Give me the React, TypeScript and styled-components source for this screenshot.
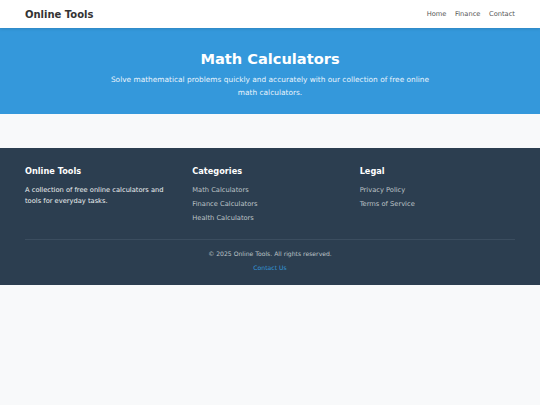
import React from 'react';
import styled, { createGlobalStyle } from 'styled-components';

const GlobalStyle = createGlobalStyle`
    html, body {
        margin: 0;
        padding: 0;
        background-color: #f8f9fa;
        font-family: "DejaVu Sans", Verdana, sans-serif;
        color: #333;
    }
    * { box-sizing: border-box; }
`;

const Container = styled.div`
    padding: 0 25px;
`;

const Header = styled.header`
    background-color: #fff;
    box-shadow: 0 1px 3px rgba(0, 0, 0, 0.12);
    position: relative;
    z-index: 1;
`;

const HeaderInner = styled(Container)`
    height: 28px;
    display: flex;
    align-items: center;
    justify-content: space-between;
`;

const Logo = styled.div`
    font-weight: bold;
    font-size: 10px;
    color: #333;
`;

const Nav = styled.nav`
    display: flex;
    gap: 8.5px;
`;

const NavLink = styled.a`
    font-size: 6.7px;
    color: #555;
    text-decoration: none;
`;

const Hero = styled.section`
    background-color: #3498db;
    color: #fff;
    text-align: center;
    padding: 22px 0 15.5px;
`;

const HeroTitle = styled.h1`
    margin: 0 0 5.5px;
    font-size: 14.6px;
    line-height: 17px;
    font-weight: bold;
`;

const HeroText = styled.p`
    margin: 0 auto;
    max-width: 332px;
    font-size: 7.4px;
    line-height: 13px;
    color: #eaf4fc;
`;

const Main = styled.main`
    height: 34px;
    background-color: #f8f9fa;
`;

const Footer = styled.footer`
    background-color: #2c3e50;
    color: #ecf0f1;
    padding: 18px 0 12px;
`;

const FooterGrid = styled.div`
    display: grid;
    grid-template-columns: repeat(3, 1fr);
    gap: 12px;
    padding-bottom: 16px;
    border-bottom: 1px solid #3b4d5f;
`;

const FooterHeading = styled.h3`
    margin: 0 0 8.5px;
    font-size: 8.2px;
    line-height: 10px;
    color: #fff;
`;

const FooterText = styled.p`
    margin: 0;
    font-size: 6.7px;
    line-height: 11px;
    color: #ecf0f1;
    max-width: 150px;
`;

const FooterLinks = styled.ul`
    list-style: none;
    margin: 0;
    padding: 0;
    display: flex;
    flex-direction: column;
    gap: 4px;
`;

const FooterLink = styled.a`
    display: block;
    font-size: 6.7px;
    line-height: 10px;
    color: #bdc3c7;
    text-decoration: none;
`;

const Bottom = styled.div`
    text-align: center;
    padding-top: 9px;
    display: flex;
    flex-direction: column;
    gap: 4px;
`;

const Copyright = styled.p`
    margin: 0;
    font-size: 6.1px;
    line-height: 10px;
    color: #bdc3c7;
`;

const ContactLink = styled.a`
    display: block;
    font-size: 6.1px;
    line-height: 10px;
    color: #3498db;
    text-decoration: none;
`;

const columns = [
    { title: 'Categories', links: ['Math Calculators', 'Finance Calculators', 'Health Calculators'] },
    { title: 'Legal', links: ['Privacy Policy', 'Terms of Service'] },
];

const App: React.FC = () => (
    <>
        <GlobalStyle />
        <Header>
            <HeaderInner>
                <Logo>Online Tools</Logo>
                <Nav>
                    <NavLink href="#">Home</NavLink>
                    <NavLink href="#">Finance</NavLink>
                    <NavLink href="#">Contact</NavLink>
                </Nav>
            </HeaderInner>
        </Header>
        <Hero>
            <Container>
                <HeroTitle>Math Calculators</HeroTitle>
                <HeroText>
                    Solve mathematical problems quickly and accurately with our collection of free online math calculators.
                </HeroText>
            </Container>
        </Hero>
        <Main />
        <Footer>
            <Container>
                <FooterGrid>
                    <div>
                        <FooterHeading>Online Tools</FooterHeading>
                        <FooterText>A collection of free online calculators and tools for everyday tasks.</FooterText>
                    </div>
                    {columns.map((col) => (
                        <div key={col.title}>
                            <FooterHeading>{col.title}</FooterHeading>
                            <FooterLinks>
                                {col.links.map((l) => (
                                    <li key={l}>
                                        <FooterLink href="#">{l}</FooterLink>
                                    </li>
                                ))}
                            </FooterLinks>
                        </div>
                    ))}
                </FooterGrid>
                <Bottom>
                    <Copyright>&copy; 2025 Online Tools. All rights reserved.</Copyright>
                    <ContactLink href="#">Contact Us</ContactLink>
                </Bottom>
            </Container>
        </Footer>
    </>
);

export default App;
